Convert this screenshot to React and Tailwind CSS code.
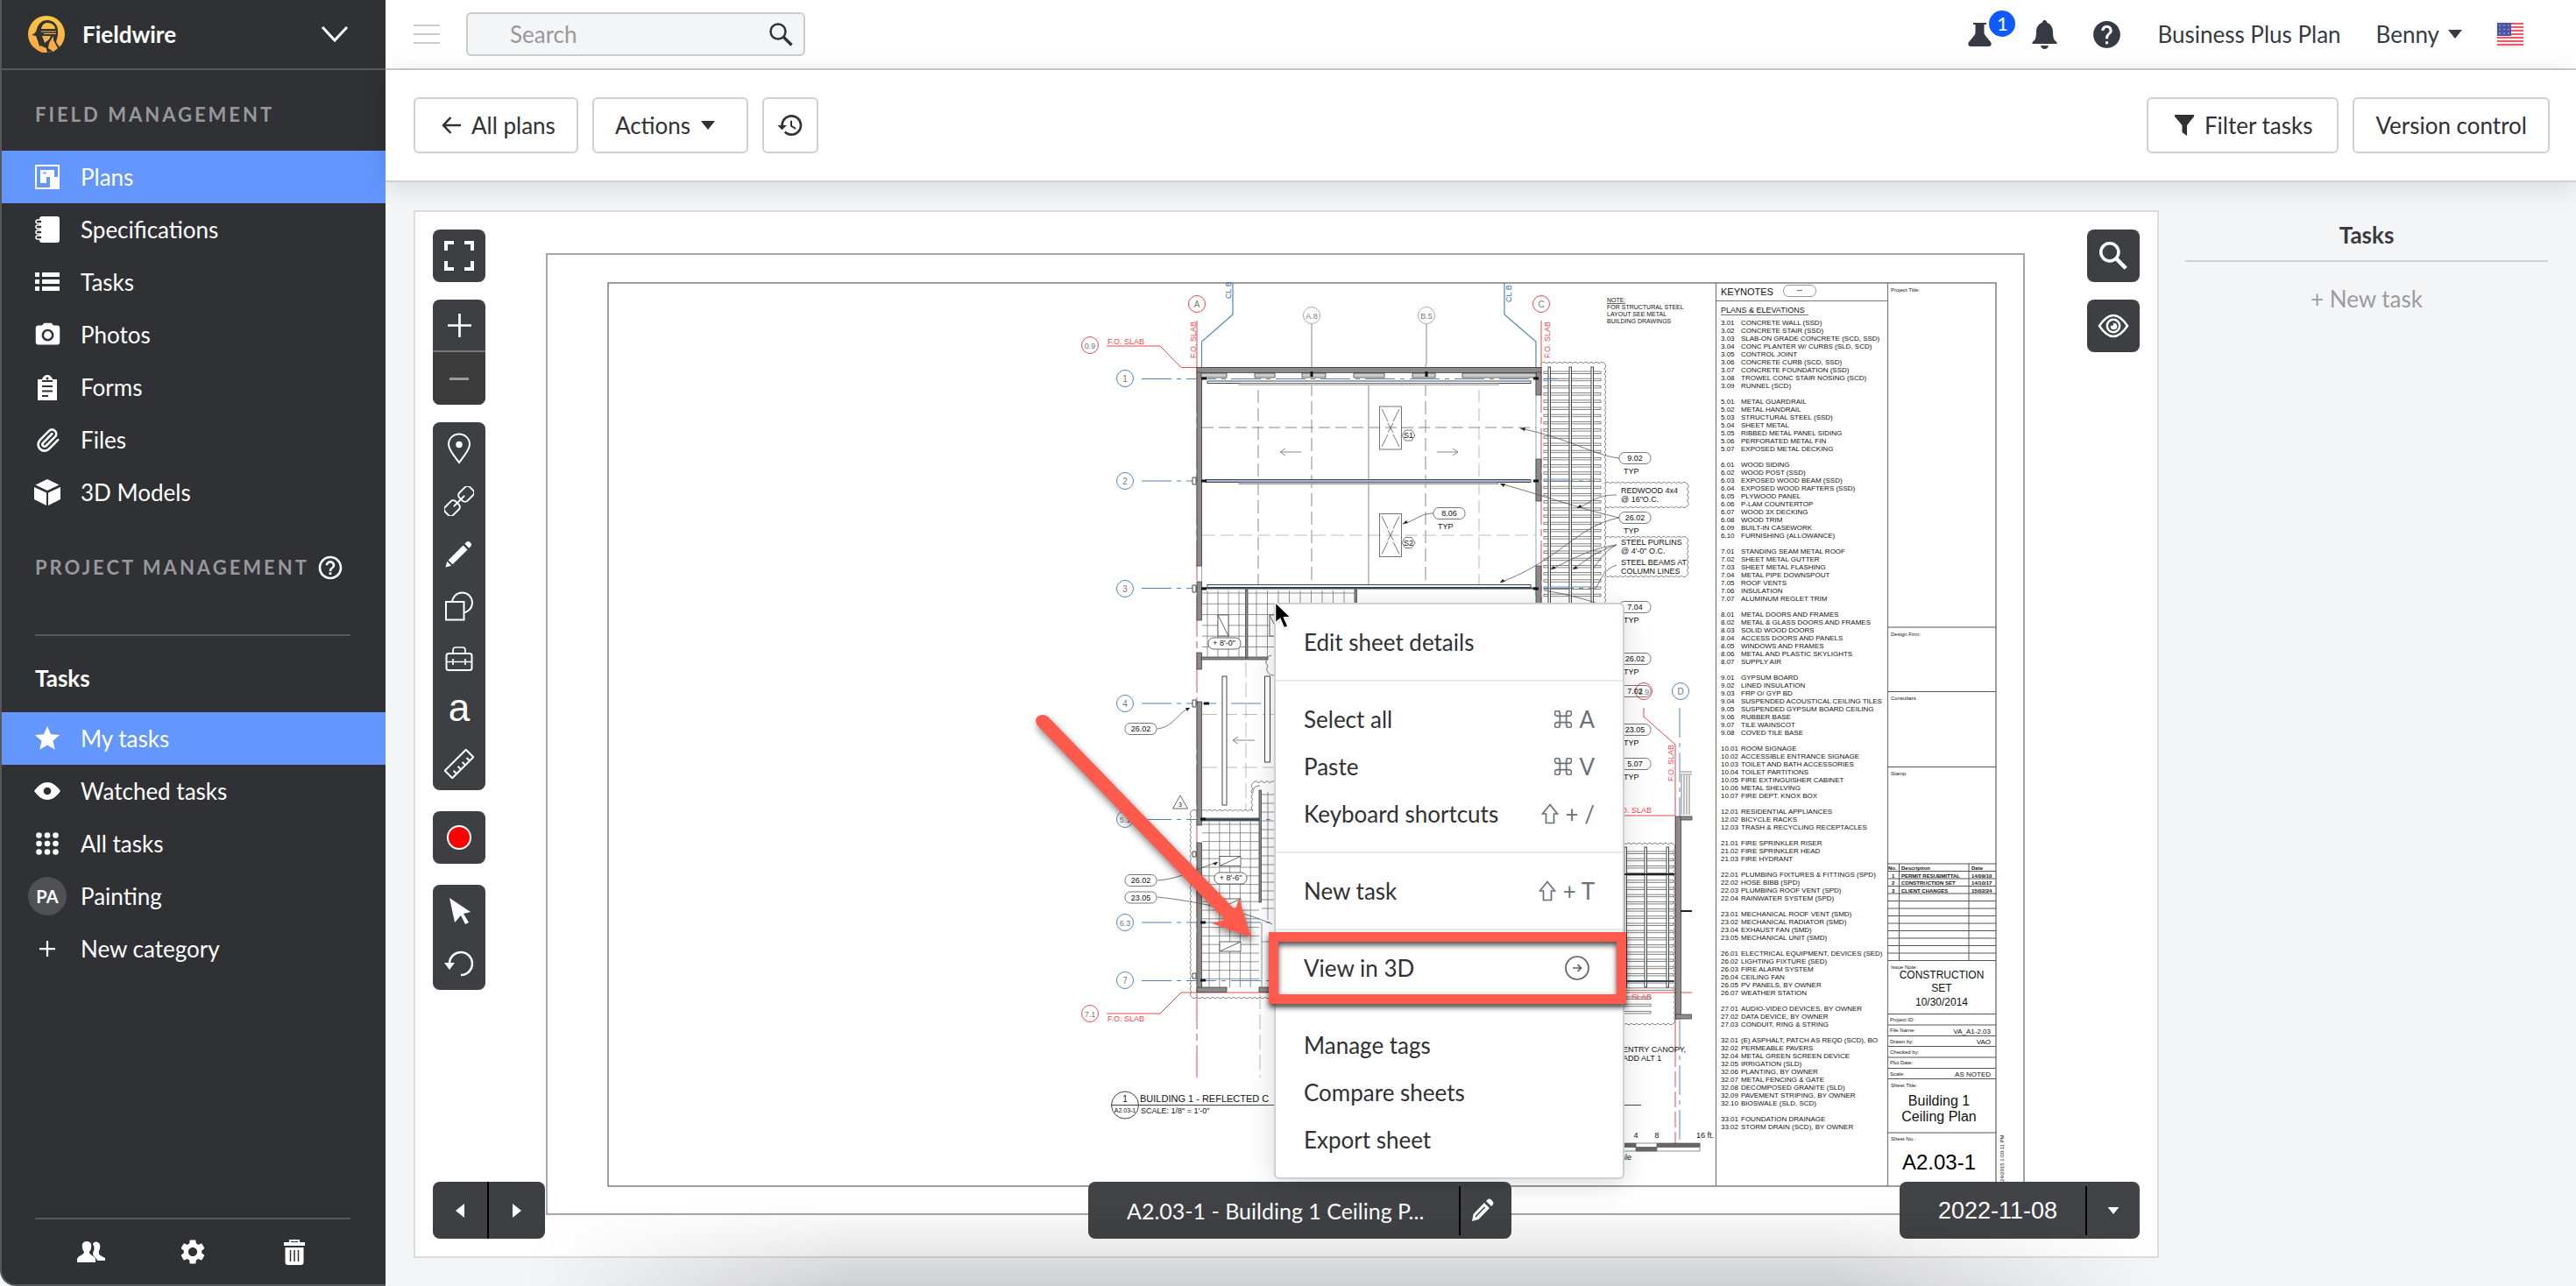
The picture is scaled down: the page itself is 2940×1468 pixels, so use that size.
import React from "react";
import { MdCameraAlt, MdHelpOutline, MdHelp, MdStar, MdSettings, MdHistory } from "react-icons/md";
import { Paperclip } from "lucide-react";

/* ---------- icons ---------- */

function Svg({ w, h, box, children, className }) {
  return (
    <svg width={w} height={h} viewBox={box || `0 0 ${w} ${h}`} fill="none" className={className} aria-hidden="true">
      {children}
    </svg>
  );
}

const Logo = () => (
  <Svg w={42} h={42}>
    <defs>
      <linearGradient id="logo" x1="0" y1="0" x2="0" y2="1">
        <stop offset="0" stopColor="#fdc840" />
        <stop offset="1" stopColor="#f6a748" />
      </linearGradient>
    </defs>
    <circle cx="21" cy="21" r="21" fill="url(#logo)" />
    <path d="M4 22 C7 21 9 19 10 15 C12 8 17 5 22 5 C29 5 34 10 34 17 L34 22 L32 30 L36 36 L31 40 L22 42 L21 38 L13 35 L12 31 L9 23 Z" fill="#303134" />
    <path d="M15 15 C16 10 19 8 22 8 C27 8 31 11 31 15 Z" fill="#fbbd43" />
    <path d="M15 18 h17 M18 20.500 h14" stroke="#fab745" strokeWidth="1.200" />
    <path d="M16 23 H26 L24 27 L19 31 Z" fill="#f9b146" />
    <path d="M29 23 V28 L34 37 L29 41 L23 37 L24 31 Z" fill="#f8ac47" />
    <path d="M14 34 L21 37 V42 H16 L10 39 Z" fill="#f6a748" />
  </Svg>
);

const Chevron = () => (
  <Svg w={32} h={20}><path d="M2 2 L16 17 L30 2" stroke="#fff" strokeWidth="3" /></Svg>
);

const PlansIcon = () => (
  <Svg w={28} h={28}>
    <rect x="1" y="1" width="26" height="26" stroke="#fff" strokeWidth="2" />
    <path d="M6 6 H22 V14 H27 V27 H17 V14 H13 V21 H6 Z" fill="#fff" />
    <path d="M9 9.500 h4 M16 14 v4" stroke="#6396ff" strokeWidth="1.500" />
  </Svg>
);
const SpecsIcon = () => (
  <Svg w={28} h={30}>
    <rect x="5" y="0" width="23" height="30" rx="3" fill="#fff" />
    {[6, 12, 18, 24].map((y) => (
      <rect key={y} x="1" y={y - 2} width="7" height="4" rx="2" fill="#303134" stroke="#fff" strokeWidth="1.500" />
    ))}
  </Svg>
);
const ListIcon = () => (
  <Svg w={28} h={22}>
    {[0, 8, 16].map((y) => (
      <g key={y} fill="#fff"><rect x="0" y={y} width="5" height="5" /><rect x="8" y={y} width="20" height="5" /></g>
    ))}
  </Svg>
);
const FormsIcon = () => (
  <Svg w={22} h={29}>
    <path d="M0 5 H5 C6 2 8 0 11 0 C14 0 16 2 17 5 H22 V29 H0 Z" fill="#fff" />
    <circle cx="11" cy="4" r="1.500" fill="#303134" />
    <path d="M5 7 H17 M5 13 H17 M5 18.500 H17 M5 24 H12" stroke="#303134" strokeWidth="2" />
  </Svg>
);
const CubeIcon = () => (
  <Svg w={30} h={30}>
    <path d="M15 0 L28.500 6.500 L15 13 L1.500 6.500 Z M0 9 L14 15.500 V30 L0 23 Z M30 9 L16 15.500 V30 L30 23 Z" fill="#fff" />
  </Svg>
);
const WatchIcon = () => (
  <Svg w={30} h={20}>
    <path d="M0 10 C5 3 10 0 15 0 C20 0 25 3 30 10 C25 17 20 20 15 20 C10 20 5 17 0 10 Z" fill="#fff" />
    <circle cx="15" cy="10" r="4.300" fill="#303134" />
  </Svg>
);
const DotsIcon = () => (
  <Svg w={26} h={26}>
    {[3.5, 13, 22.5].map((y) => [3.5, 13, 22.5].map((x) => <circle key={`${x}-${y}`} cx={x} cy={y} r="3.300" fill="#fff" />))}
  </Svg>
);
const PlusIcon = ({ size = 18, stroke = 2.5 }) => (
  <Svg w={size} h={size} box="0 0 20 20"><path d="M10 0 V20 M0 10 H20" stroke="#fff" strokeWidth={stroke} /></Svg>
);
const PeopleIcon = () => (
  <Svg w={32} h={24}>
    <path d="M18 3 C19 1 21 0 23 1 C27 2 27 7 25 11 C24 15 26 16 32 19 V22 H23 C22 18 17 17 18 13 C20 10 20 6 18 3 Z" fill="#fff" />
    <path d="M11 0 C15 0 17 3 16 7 C16 9 15 11 14 12 C13 16 21 16 21 21 V24 H0 V21 C0 16 8 16 8 12 C7 11 6 9 6 7 C5 3 7 0 11 0 Z" fill="#fff" />
  </Svg>
);
const TrashIcon = () => (
  <Svg w={24} h={29}>
    <path d="M7 3 V1 H17 V3" stroke="#fff" strokeWidth="2" />
    <path d="M0 3 H24 V7 H0 Z M1.500 9 H22.500 V26 Q22.500 29 19 29 H5 Q1.500 29 1.500 26 Z" fill="#fff" />
    <path d="M7.500 12 V25 M12 12 V25 M16.500 12 V25" stroke="#303134" strokeWidth="1.500" />
  </Svg>
);
const SearchIcon = ({ size = 27, color = "#333", stroke = 2.5 }) => (
  <Svg w={size} h={size} box="0 0 27 27">
    <circle cx="10" cy="10" r="8.500" stroke={color} strokeWidth={stroke} />
    <path d="M16 16 L25.500 25.500" stroke={color} strokeWidth={stroke + 0.8} />
  </Svg>
);
const FlaskIcon = () => (
  <Svg w={27} h={27}>
    <path d="M6 0 H21 V2 H18.500 V12 Q19 14 26 22 Q28 26 24.500 27 H2.500 Q-1 26 1 22 Q8 14 8.500 12 V2 H6 Z" fill="#353a45" />
  </Svg>
);
const BellIcon = () => (
  <Svg w={29} h={33}>
    <circle cx="14.500" cy="2.500" r="2.500" fill="#353a45" />
    <path d="M14.500 2 C21 3 24 8 24 13 C24 20 25 23 28.500 25 Q29 27 28 27 H1 Q0 27 .5 25 C4 23 5 20 5 13 C5 8 8 3 14.500 2 Z" fill="#353a45" />
    <path d="M10 29 H19 Q18 33 14.500 33 Q11 33 10 29 Z" fill="#353a45" />
  </Svg>
);
const Caret = ({ w = 16, h = 10, color = "#303134" }) => (
  <Svg w={w} h={h} box="0 0 16 10"><path d="M0 0 H16 L8 10 Z" fill={color} /></Svg>
);
const Flag = () => (
  <Svg w={30} h={26}>
    <rect width="30" height="26" rx="1" fill="#f3f3f5" />
    {[0, 4, 8, 12, 16, 20, 24].map((y) => <rect key={y} y={y} width="30" height="2" fill="#ee5a62" />)}
    <rect width="16" height="15" fill="#4a55a5" />
    {[3, 7.5, 12].map((y) => [3, 8, 13].map((x) => <circle key={`${x}-${y}`} cx={x} cy={y} r=".8" fill="#c5c9e8" />))}
  </Svg>
);
const FilterIcon = () => (
  <Svg w={22} h={24}><path d="M0 0 H22 V2 L14 12 V24 L8.500 20 V12 L0 2 Z" fill="#303134" /></Svg>
);
const ArrowLeft = () => (
  <Svg w={22} h={20}><path d="M10.500 1 L2 10 L10.500 19 M2 10 H22" stroke="#303134" strokeWidth="2.500" /></Svg>
);
const FullscreenIcon = () => (
  <Svg w={34} h={34}><path d="M11 2 H2 V11 M23 2 H32 V11 M11 32 H2 V23 M23 32 H32 V23" stroke="#fff" strokeWidth="4" /></Svg>
);
const PinIcon = () => (
  <Svg w={28} h={36}>
    <path d="M14 34 C9 27 2 20 2 13 A12 11.500 0 0 1 26 13 C26 20 19 27 14 34 Z" stroke="#fff" strokeWidth="2" />
    <circle cx="14" cy="13.500" r="3.700" fill="#fff" />
  </Svg>
);
const LinkIcon = () => (
  <Svg w={34} h={34}>
    <g transform="rotate(-45 17 17)" stroke="#fff" strokeWidth="2">
      <rect x="-3" y="10.500" width="17" height="13" rx="4" />
      <rect x="20" y="10.500" width="17" height="13" rx="4" />
      <path d="M9 17 H25" strokeLinecap="round" />
    </g>
  </Svg>
);
const PencilIcon = () => (
  <Svg w={32} h={32}>
    <g transform="rotate(-45 16 16)" fill="#fff">
      <rect x="2" y="12.500" width="24" height="7" />
      <path d="M0 12.500 V19.500 L-6 16 Z M28.500 12.500 H31 Q34 12.500 34 16 Q34 19.500 31 19.500 H28.500 Z" />
    </g>
  </Svg>
);
const ShapesIcon = () => (
  <Svg w={34} h={34}>
    <circle cx="20.500" cy="13" r="11.500" stroke="#fff" strokeWidth="2" />
    <rect x="2" y="12" width="20.500" height="20.500" fill="#3e3f43" stroke="#fff" strokeWidth="2" />
  </Svg>
);
const ToolboxIcon = () => (
  <Svg w={32} h={28}>
    <path d="M9 8 V4 Q9 1 12 1 H20 Q23 1 23 4 V8 M1 17.500 H31 M9 14 V21 M23 14 V21" stroke="#fff" strokeWidth="1.700" />
    <rect x="1.500" y="8" width="29" height="19" rx="2.500" stroke="#fff" strokeWidth="2" />
  </Svg>
);
const RulerIcon = () => (
  <Svg w={34} h={34}>
    <g transform="rotate(-45 17 17)" stroke="#fff" strokeWidth="2">
      <rect x="0" y="11" width="34" height="12" />
      <path d="M7 23 V18 M14 23 V18 M21 23 V18 M28 23 V18" />
    </g>
  </Svg>
);
const CursorIcon = () => (
  <Svg w={25} h={30}><path d="M1 0 L25 16 L17 18 L23 28 L19 30 L14 20 L7 28 Z" fill="#fff" /></Svg>
);
const UndoIcon = () => (
  <Svg w={34} h={32}>
    <path d="M6 15 A13 13 0 1 1 19 29" stroke="#fff" strokeWidth="2.500" />
    <path d="M0 15 H12 L6 23 Z" fill="#fff" />
  </Svg>
);
const EyeIcon = () => (
  <Svg w={36} h={28}>
    <path d="M2 14 C8 5 13 2 18 2 C23 2 28 5 34 14 C28 23 23 26 18 26 C13 26 8 23 2 14 Z" stroke="#fff" strokeWidth="2.500" />
    <circle cx="18" cy="14" r="7.200" stroke="#fff" strokeWidth="2.500" />
    <circle cx="18.500" cy="14.500" r="3.800" fill="#fff" /><circle cx="16" cy="12" r="2" fill="#3e3f43" />
  </Svg>
);
const EditIcon = () => (
  <Svg w={26} h={27}>
    <path d="M1 26 L2.500 18 L15 5 L21 11 L8.500 24 Z M17 3 L19.500 .8 Q21 0 22.500 1 L25 4 Q26 5.500 25 7 L23 9 Z" fill="#fff" />
    <path d="M5 21 L15.500 10" stroke="#3e3f43" strokeWidth="1.500" />
  </Svg>
);
const Side = ({ left }) => (
  <Svg w={10} h={16}><path d={left ? "M10 0 V16 L0 8 Z" : "M0 0 V16 L10 8 Z"} fill="#fff" /></Svg>
);
const CommandIcon = () => (
  <Svg w={20} h={20} box="1 1 22 22">
    <path d="M8 8 H16 V16 H8 Z M8 8 H5 A3.300 3.300 0 1 1 8 5 Z M16 8 V5 A3.300 3.300 0 1 1 19 8 Z M8 16 V19 A3.300 3.300 0 1 1 5 16 Z M16 16 H19 A3.300 3.300 0 1 1 16 19 Z" stroke="#6b6f78" strokeWidth="1.900" />
  </Svg>
);
const ShiftIcon = () => (
  <Svg w={20} h={24}><path d="M10 1.500 L18.500 12 H14.500 V22.500 H5.500 V12 H1.500 Z" stroke="#6b6f78" strokeWidth="1.700" /></Svg>
);
const GoIcon = () => (
  <Svg w={28} h={28}>
    <circle cx="14" cy="14" r="13" stroke="#5c6068" strokeWidth="1.700" />
    <path d="M9 14 H18.500 M14.500 10 L18.500 14 L14.500 18" stroke="#5c6068" strokeWidth="1.700" />
  </Svg>
);

/* ---------- plan sheet ---------- */

const KEYNOTES = [
  ["3.01|CONCRETE WALL (SSD)", "3.02|CONCRETE STAIR (SSD)", "3.03|SLAB-ON GRADE CONCRETE (SCD, SSD)", "3.04|CONC PLANTER W/ CURBS (SLD, SCD)", "3.05|CONTROL JOINT", "3.06|CONCRETE CURB (SCD, SSD)", "3.07|CONCRETE FOUNDATION (SSD)", "3.08|TROWEL CONC STAIR NOSING (SCD)", "3.09|RUNNEL (SCD)"],
  ["5.01|METAL GUARDRAIL", "5.02|METAL HANDRAIL", "5.03|STRUCTURAL STEEL (SSD)", "5.04|SHEET METAL", "5.05|RIBBED METAL PANEL SIDING", "5.06|PERFORATED METAL FIN", "5.07|EXPOSED METAL DECKING"],
  ["6.01|WOOD SIDING", "6.02|WOOD POST (SSD)", "6.03|EXPOSED WOOD BEAM (SSD)", "6.04|EXPOSED WOOD RAFTERS (SSD)", "6.05|PLYWOOD PANEL", "6.06|P-LAM COUNTERTOP", "6.07|WOOD 3X DECKING", "6.08|WOOD TRIM", "6.09|BUILT-IN CASEWORK", "6.10|FURNISHING (ALLOWANCE)"],
  ["7.01|STANDING SEAM METAL ROOF", "7.02|SHEET METAL GUTTER", "7.03|SHEET METAL FLASHING", "7.04|METAL PIPE DOWNSPOUT", "7.05|ROOF VENTS", "7.06|INSULATION", "7.07|ALUMINUM REGLET TRIM"],
  ["8.01|METAL DOORS AND FRAMES", "8.02|METAL & GLASS DOORS AND FRAMES", "8.03|SOLID WOOD DOORS", "8.04|ACCESS DOORS AND PANELS", "8.05|WINDOWS AND FRAMES", "8.06|METAL AND PLASTIC SKYLIGHTS", "8.07|SUPPLY AIR"],
  ["9.01|GYPSUM BOARD", "9.02|LINED INSULATION", "9.03|FRP O/ GYP BD", "9.04|SUSPENDED ACOUSTICAL CEILING TILES", "9.05|SUSPENDED GYPSUM BOARD CEILING", "9.06|RUBBER BASE", "9.07|TILE WAINSCOT", "9.08|COVED TILE BASE"],
  ["10.01|ROOM SIGNAGE", "10.02|ACCESSIBLE ENTRANCE SIGNAGE", "10.03|TOILET AND BATH ACCESSORIES", "10.04|TOILET PARTITIONS", "10.05|FIRE EXTINGUISHER CABINET", "10.06|METAL SHELVING", "10.07|FIRE DEPT. KNOX BOX"],
  ["12.01|RESIDENTIAL APPLIANCES", "12.02|BICYCLE RACKS", "12.03|TRASH & RECYCLING RECEPTACLES"],
  ["21.01|FIRE SPRINKLER RISER", "21.02|FIRE SPRINKLER HEAD", "21.03|FIRE HYDRANT"],
  ["22.01|PLUMBING FIXTURES & FITTINGS (SPD)", "22.02|HOSE BIBB (SPD)", "22.03|PLUMBING ROOF VENT (SPD)", "22.04|RAINWATER SYSTEM (SPD)"],
  ["23.01|MECHANICAL ROOF VENT (SMD)", "23.02|MECHANICAL RADIATOR (SMD)", "23.04|EXHAUST FAN (SMD)", "23.05|MECHANICAL UNIT (SMD)"],
  ["26.01|ELECTRICAL EQUIPMENT, DEVICES (SED)", "26.02|LIGHTING FIXTURE (SED)", "26.03|FIRE ALARM SYSTEM", "26.04|CEILING FAN", "26.05|PV PANELS, BY OWNER", "26.07|WEATHER STATION"],
  ["27.01|AUDIO-VIDEO DEVICES, BY OWNER", "27.02|DATA DEVICE, BY OWNER", "27.03|CONDUIT, RING & STRING"],
  ["32.01|(E) ASPHALT, PATCH AS REQD (SCD), BO", "32.02|PERMEABLE PAVERS", "32.04|METAL GREEN SCREEN DEVICE", "32.05|IRRIGATION (SLD)", "32.06|PLANTING, BY OWNER", "32.07|METAL FENCING & GATE", "32.08|DECOMPOSED GRANITE (SLD)", "32.09|PAVEMENT STRIPING, BY OWNER", "32.10|BIOSWALE (SLD, SCD)"],
  ["33.01|FOUNDATION DRAINAGE", "33.02|STORM DRAIN (SCD), BY OWNER"],
];
const NOTE_LINES = KEYNOTES.flatMap((g, i) => (i ? [null, ...g] : g));

const RED = "#e8484e";
const BLUE = "#4f86b8";

const range = (from, to, step) => {
  const out = [];
  for (let v = from; v <= to; v += step) out.push(v);
  return out;
};

/* revision cloud: scallops along a list of corner points */
function cloud(points) {
  let d = `M${points[0][0]} ${points[0][1]}`;
  for (let i = 1; i < points.length; i++) {
    const [x0, y0] = points[i - 1];
    const [x1, y1] = points[i];
    const n = Math.max(1, Math.round(Math.hypot(x1 - x0, y1 - y0) / 6));
    for (let k = 1; k <= n; k++) d += ` A3.500 3.500 0 0 1 ${x0 + ((x1 - x0) * k) / n} ${y0 + ((y1 - y0) * k) / n}`;
  }
  return d;
}

const T = ({ x, y, s = 9, a, c = "#111", b, r, children }) => (
  <text x={x} y={y} fontSize={s} textAnchor={a} fill={c} fontWeight={b ? 700 : 400} transform={r ? `rotate(-90 ${x} ${y})` : undefined}>
    {children}
  </text>
);
const Bubble = ({ x, y, c, children }) => (
  <g>
    <circle cx={x} cy={y} r="9.500" stroke={c} />
    <T x={x} y={y + 4} s={String(children).length > 2 ? 9 : 10} a="middle" c="#777">{children}</T>
  </g>
);
const Tag = ({ x, y, typ, children }) => (
  <g>
    <rect x={x - 18} y={y - 6.5} width="36" height="13" rx="6" stroke="#555" strokeWidth=".8" />
    <T x={x} y={y + 3} a="middle">{children}</T>
    {typ && <T x={x - 13} y={y + 18}>TYP</T>}
  </g>
);
const Skylight = ({ y, label }) => (
  <g stroke="#666" strokeWidth=".9">
    <rect x="1574.500" y={y} width="25" height="49" />
    <path d={`M1577 ${y + 3} l7 14 M1597 ${y + 3} l-7 14 M1577 ${y + 46} l7 -14 M1597 ${y + 46} l-7 -14 M1584 ${y + 19} l6 11 M1590 ${y + 19} l-6 11`} />
    <path d={`M1604 ${y + 27} h7 l4 6 l-4 6 h-7 l-4 -6 Z`} />
    <g stroke="none"><T x={1607.5} y={y + 36} a="middle">{label}</T></g>
  </g>
);

function PlanSheet() {
  const F = 7;
  return (
    <svg viewBox="474 242 1988 1192" className="absolute inset-0 h-full w-full" fill="none" fontFamily="'Liberation Sans', Arial, sans-serif" role="img" aria-label="Building 1 reflected ceiling plan">
      <rect x="624" y="290" width="1686" height="1096" stroke="#a6a6a6" strokeWidth="2" />
      <path d="M694 323 H2278 V1354 H694 Z" stroke="#7d7d7d" strokeWidth="1.500" />

      {/* upper pergola */}
      <g stroke="#777" strokeWidth=".9">
        {range(424, 684, 8.2).map((y) => <rect key={y} x="1762" y={y} width="65" height="2.500" />)}
        {[1767, 1791, 1816].map((x) => <rect key={x} x={x} y="419" width="2.500" height="271" fill="#fff" stroke="#333" />)}
        <path d={cloud([[1759, 415], [1831, 415], [1831, 700]])} />
        <path d={cloud([[1832, 552], [1925, 552], [1925, 578], [1832, 578]])} />
        <path d={cloud([[1832, 614], [1925, 614], [1925, 657], [1832, 657]])} />
      </g>

      {/* grid lines */}
      <g stroke={BLUE} strokeWidth="1" strokeDasharray="34 6 5 6">
        <path d="M1303 432.500 H1778" /><path d="M1303 549 H1820" /><path d="M1303 671.500 H1820" />
        <path d="M1303 803 H1455" /><path d="M1303 935.500 H1455" /><path d="M1303 1053 H1455" /><path d="M1303 1119.500 H1455" />
        <path d="M1917 808 V1310" />
      </g>
      <g stroke={BLUE} strokeWidth="1.200">
        <path d="M1407 323 V359 L1371.500 390 V425" /><path d="M1717 323 V359 L1753 390 V425" />
        <path d="M1371.500 425 V690 M1753 425 V680" strokeWidth=".7" />
      </g>
      <g stroke={RED} strokeWidth="1">
        <path d="M1263 395 H1324 L1348 419.500 H1759" />
        <path d="M1366 366 V425 M1759 366 V425" />
        <path d="M1366 425 V1230 M1759 425 V690" strokeDasharray="46 5 8 5" />
        <path d="M1263 1157 H1324 L1348 1133 H1455" />
        <path d="M1876 808 V818 L1912 850 V1200" /><path d="M1912 1200 V1310" strokeDasharray="18 5" />
        <path d="M1853 931 H1912 M1853 1133 H1931" />
      </g>
      <g stroke="#888" strokeWidth="1">
        <path d="M1497 370 V416 M1628 370 V416" />
        <path d="M1436 445 V671 M1497 416 V671 M1627 416 V671" strokeDasharray="15 6" />
        <path d="M1688 445 V671 M1372 611 H1753" stroke="#bbb" strokeDasharray="15 6" />
        <path d="M1372 488 H1753" strokeDasharray="13 6" />
        <path d="M1562 436 V671" />
        <path d="M1461 516 H1485 M1467 512 L1461 516 L1467 520 M1640 516 H1664 M1658 512 L1664 516 L1658 520" />
        <path d="M1422 756 V925 M1372 815.500 H1455 M1372 876 H1455 M1438 1135 V1230" stroke="#bbb" strokeDasharray="17 6" />
        <path d="M1407 845 H1432 M1413 841 L1407 845 L1413 849" />
      </g>
      <Skylight y={464} label="S1" />
      <Skylight y={586.5} label="S2" />

      {/* walls */}
      <g fill="#8c8c8c" stroke="#333" strokeWidth=".7">
        <rect x="1366" y="419.500" width="393" height="6" />
        {[[425, 221], [664, 44], [745, 19], [801, 141], [962, 170]].map(([y, h]) => <rect key={y} x="1366" y={y} width="5.500" height={h} />)}
        {[[425, 26], [524, 48], [646, 44]].map(([y, h]) => <rect key={y} x="1753" y={y} width="6" height={h} />)}
        {[[1371, 29], [1432, 23], [1486, 27], [1545, 35], [1612, 26], [1669, 84]].map(([x, w]) => <rect key={x} x={x} y="426" width={w} height="5" fill="#ccc" />)}
        <rect x="1366" y="1127" width="34" height="5.500" /><rect x="1437" y="1127" width="18" height="5.500" />
        <rect x="1371" y="750" width="76" height="3" /><rect x="1421.500" y="673" width="2.500" height="78" /><rect x="1546" y="673" width="2.500" height="20" />
        <rect x="1371" y="934" width="66" height="3" /><rect x="1437" y="902" width="2.500" height="128" />
        <rect x="1912.500" y="932" width="6" height="231" /><rect x="1918" y="932" width="13" height="4" /><rect x="1912.500" y="1158" width="18" height="5" />
      </g>
      <g fill="#fff" stroke="#333" strokeWidth=".9">
        <rect x="1378" y="435" width="369" height="2.500" /><rect x="1376" y="547.500" width="371" height="3" /><rect x="1378" y="667.500" width="369" height="3" />
        <rect x="1414" y="438" width="296" height="1.500" stroke="#aaa" /><rect x="1414" y="551" width="296" height="1.500" stroke="#888" />
        <rect x="1395" y="772" width="5" height="147" /><rect x="1443.500" y="772" width="6" height="98" />
        <path d="M1361 545 h4 v8 h-4 Z M1361 668 h4 v8 h-4 Z M1361 799 h4 v8 h-4 Z M1361 972 h4 v6 h-4 Z M1361 1111 h4 v6 h-4 Z" />
      </g>
      <path d="M1376 549 H1747" stroke="#7fa3c4" strokeWidth="1.500" />
      <path d="M1372 671.500 H1753 M1371 935.500 H1437" stroke="#30475e" strokeWidth="2" />
      <path d="M1371 432 h6 M1750 432 h6 M1371 549 h6 M1750 549 h6 M1371 672 h6 M1750 672 h6 M1374 803 h6 M1370 935 h6 M1370 1053 h6 M1370 1119 h6 M1497 424 v6 M1628 424 v6" stroke="#111" strokeWidth="3" />

      {/* ceiling grids */}
      <g stroke="#777" strokeWidth=".8">
        {range(1378, 1416, 12).map((x) => <path key={x} d={`M${x} 674 V750`} />)}
        {range(1434, 1546, 12.5).map((x) => <path key={x} d={`M${x} 674 V750`} />)}
        {range(677, 742, 12.3).map((y) => <path key={y} d={`M1372 ${y} H1547`} />)}
        {range(1380, 1434, 11.8).map((x) => <path key={x} d={`M${x} 938 V1127`} />)}
        {range(941, 1124, 9.8).map((y) => <path key={y} d={`M1372 ${y} H1437`} />)}
        {range(907, 1046, 10).map((y) => <path key={y} d={`M1440 ${y} H1455`} />)}
        <path d="M1447 904 V1050 M1440 1053 V1127 M1440 1075 H1455" />
      </g>
      <g fill="#fff" stroke="#555" strokeWidth=".9">
        <path d="M1390 702 h12 v24 h-12 Z l12 24 M1449 702 h12 v24 h-12 Z l12 24" />
        <path d="M1392 977.500 h24 v11 h-24 Z m24 0 l-24 11 M1392 1026 h24 v11 h-24 Z m24 0 l-24 11 M1392 1075 h24 v11 h-24 Z m24 0 l-24 11" />
        <rect x="1379" y="728" width="37" height="13" rx="6" /><rect x="1386" y="996" width="37" height="13" rx="6" />
      </g>
      <T x={1397} y={737} a="middle">+ 8'-0"</T>
      <T x={1404.5} y={1005} a="middle">+ 8'-6"</T>
      <path d={cloud([[1430, 925], [1430, 894], [1456, 894]])} stroke="#777" strokeWidth=".9" />
      <path d={cloud([[1456, 1138], [1360, 1138], [1360, 926], [1430, 926]])} stroke="#777" strokeWidth=".9" />
      <path d="M1456 770 a7 7 0 0 1 -9 -10 a7 7 0 0 1 4 -12 M1430 905 a7 7 0 0 1 8 -8" stroke="#777" />
      <path d="M1347 908 L1355.500 923 H1338.500 Z" stroke="#666" /><T x={1347} y={921} s={F} a="middle">3</T>

      {/* lower pergola and entry wall */}
      <g stroke="#777" strokeWidth=".9">
        {range(972, 1131, 8.2).map((y) => <rect key={y} x="1850" y={y} width="60" height="2.500" />)}
        {range(1138, 1162, 8.2).map((y) => <rect key={y} x="1850" y={y} width="34" height="2.500" />)}
        {[1854, 1877, 1902].map((x) => <rect key={x} x={x} y="967" width="2.500" height="160" fill="#fff" stroke="#333" />)}
        <path d={cloud([[1850, 964], [1910, 964], [1910, 1168], [1850, 1168]])} />
        <path d="M1918 881 H1931 M1918 884 H1931 M1919 885 V930 M1922 885 V930 M1925 885 V930 M1928 885 V930" />
        <path d="M1853 998 H1911 M1918 1040 H1931" stroke="#222" strokeWidth="2" />
        <path d="M1853 1120 H1911" stroke="#30475e" strokeWidth="2" />
      </g>

      {/* leaders */}
      <g stroke="#555" strokeWidth=".8">
        <path d="M1848 523 C1820 520 1790 500 1735 489 M1848 591 C1800 580 1760 565 1712 552 M1848 591 C1800 600 1780 640 1712 665 M1636 586 C1620 586 1615 595 1601 598" />
        <path d="M1845 565 C1820 565 1815 575 1800 580 M1845 622 C1820 625 1800 635 1770 650 M1845 622 C1820 630 1810 640 1795 650 M1845 622 C1830 630 1825 640 1818 650 M1845 645 C1830 650 1828 660 1821 672" />
        <path d="M1850 700 C1830 690 1800 680 1762 674 M1321 832 C1340 830 1345 812 1358 808 M1321 1005 C1345 1004 1370 990 1390 984 M1321 1024 C1360 1028 1420 1040 1452 1055" />
      </g>
      <path d="M1735 489 l6 -1 l-1 4 Z M1712 552 l6 0 l-2 4 Z M1712 665 l6 -1 l-3 -3 Z M1601 598 l6 -1 l-2 -3 Z M1800 580 l6 -1 l-3 -3 Z M1770 650 l6 -1 l-3 -3 Z M1795 650 l6 -1 l-3 -3 Z M1358 808 l-5 0 l2 4 Z M1390 984 l-6 1 l3 3 Z" fill="#222" />

      {/* bubbles */}
      <Bubble x={1366} y={347} c={RED}>A</Bubble><Bubble x={1497} y={360} c="#aaa">A.8</Bubble>
      <Bubble x={1628} y={360} c="#aaa">B.5</Bubble><Bubble x={1759} y={347} c={RED}>C</Bubble>
      <Bubble x={1244} y={394} c={RED}>0.9</Bubble><Bubble x={1284} y={432} c={BLUE}>1</Bubble>
      <Bubble x={1284} y={549} c={BLUE}>2</Bubble><Bubble x={1284} y={672} c={BLUE}>3</Bubble>
      <Bubble x={1284} y={803} c={BLUE}>4</Bubble><Bubble x={1284} y={935} c={BLUE}>5.1</Bubble>
      <Bubble x={1284} y={1053} c={BLUE}>6.3</Bubble><Bubble x={1284} y={1119} c={BLUE}>7</Bubble>
      <Bubble x={1244} y={1157} c={RED}>7.1</Bubble><Bubble x={1876} y={789} c={RED}>2.9</Bubble>
      <Bubble x={1918} y={789} c={BLUE}>D</Bubble>
      <T x={1264} y={393} c={RED}>F.O. SLAB</T><T x={1264} y={1166} c={RED}>F.O. SLAB</T>
      <T x={1365} y={409} c={RED} r>F.O. SLAB</T><T x={1769} y={409} c={RED} r>F.O. SLAB</T>
      <T x={1910} y={892} c={RED} r>F.O. SLAB</T>
      <T x={1885} y={928} a="end" c={RED}>F.O. SLAB</T><T x={1885} y={1141} a="end" c={RED}>F.O. SLAB</T>
      <T x={1405} y={341} c="#2d6ca5" r>CL B</T><T x={1725} y={345} c="#2d6ca5" r>CL B</T>

      {/* tags */}
      <Tag x={1654} y={586} typ>8.06</Tag><Tag x={1866} y={523} typ>9.02</Tag><Tag x={1866} y={591} typ>26.02</Tag>
      <Tag x={1866} y={693} typ>7.04</Tag><Tag x={1866} y={752} typ>26.02</Tag><Tag x={1866} y={789}>7.02</Tag>
      <Tag x={1866} y={833} typ>23.05</Tag><Tag x={1866} y={872} typ>5.07</Tag><Tag x={1302} y={832}>26.02</Tag>
      <Tag x={1302} y={1005}>26.02</Tag><Tag x={1302} y={1024.5}>23.05</Tag>
      <T x={1850} y={563}>REDWOOD 4x4</T><T x={1850} y={573}>@ 16"O.C.</T>
      <T x={1850} y={622}>STEEL PURLINS</T><T x={1850} y={632}>@ 4'-0" O.C.</T>
      <T x={1850} y={645}>STEEL BEAMS AT</T><T x={1850} y={655}>COLUMN LINES</T>
      <T x={1834} y={345} s={F}>NOTE:</T><path d="M1834 346.500 h21" stroke="#222" strokeWidth=".7" />
      <T x={1834} y={353} s={F}>FOR STRUCTURAL STEEL</T><T x={1834} y={361} s={F}>LAYOUT SEE METAL</T><T x={1834} y={369} s={F}>BUILDING DRAWINGS</T>
      <T x={1852} y={1201}>ENTRY CANOPY,</T><T x={1852} y={1211}>ADD ALT 1</T>

      {/* drawing title and scale bar */}
      <circle cx="1284" cy="1261.500" r="15.500" stroke="#444" />
      <path d="M1268 1261.500 H1873" stroke="#444" />
      <T x={1284} y={1258} s={10} a="middle">1</T><T x={1284} y={1270} s={F} a="middle">A2.03-1</T>
      <T x={1301} y={1258} s={11}>BUILDING 1 - REFLECTED C</T><T x={1302} y={1271}>SCALE:  1/8" = 1'-0"</T>
      <g fill="#666" stroke="#555" strokeWidth=".7">
        <rect x="1840" y="1305" width="27" height="4.500" /><rect x="1891" y="1305" width="49" height="4.500" /><rect x="1867" y="1309.500" width="24" height="4.500" />
      </g>
      <path d="M1840 1314 H1940 V1305 M1867 1305 H1891" stroke="#777" strokeWidth=".8" />
      <T x={1867} y={1299} a="middle">4</T><T x={1891} y={1299} a="middle">8</T><T x={1956} y={1299} a="end">16 ft.</T><T x={1862} y={1324} a="end">Scale</T>

      {/* keynotes */}
      <path d="M1958.500 323 V1354 M2154.500 323 V1354 M1958.500 343.500 H2154.500" stroke="#777" strokeWidth="1.200" />
      <T x={1964} y={337} s={11}>KEYNOTES</T>
      <rect x="2035.500" y="325.500" width="37" height="13" rx="6" stroke="#777" strokeWidth=".8" /><path d="M2051 331.500 h6" stroke="#777" />
      <T x={1964} y={357} s={9}>PLANS &amp; ELEVATIONS</T>
      <path d="M1964 359.500 h100" stroke="#777" />
      {NOTE_LINES.map((line, i) =>
        line ? (
          <g key={line}>
            <T x={1964} y={371 + i * 9} s={8}>{line.split("|")[0]}</T>
            <T x={1987} y={371 + i * 9} s={8}>{line.split("|")[1]}</T>
          </g>
        ) : null
      )}

      {/* title block */}
      <g stroke="#555" strokeWidth="1">
        {[716, 789.5, 875.5, 1157.5, 1170, 1182.5, 1194.5, 1207, 1219.5, 1231.5, 1293].map((y) => <path key={y} d={`M2154.500 ${y} H2278`} />)}
        {range(986, 1097, 8.5).map((y) => <path key={y} d={`M2154.500 ${y} H2278`} />)}
        <path d="M2167.500 986 V1096 M2247 986 V1096" />
      </g>
      <T x={2158} y={333} s={6}>Project Title:</T><T x={2158} y={726} s={6}>Design Firm:</T><T x={2158} y={799} s={6}>Consultant</T><T x={2158} y={885} s={6}>Stamp</T>
      <T x={2155} y={993} s={6} b>No.</T><T x={2170} y={993} s={6} b>Description</T><T x={2250} y={993} s={6} b>Date</T>
      {[["1", "PERMIT RESUBMITTAL", "14/09/10"], ["2", "CONSTRUCTION SET", "14/10/17"], ["3", "CLIENT CHANGES", "15/02/24"]].map(([n, d, t], i) => (
        <g key={n}>
          <T x={2159} y={1001.5 + i * 8.5} s={6} b>{n}</T><T x={2170} y={1001.5 + i * 8.5} s={6} b>{d}</T><T x={2250} y={1001.5 + i * 8.5} s={6} b>{t}</T>
        </g>
      ))}
      <T x={2158} y={1106} s={6}>Issue Note:</T>
      <T x={2216} y={1117} s={12} a="middle">CONSTRUCTION</T><T x={2216} y={1132} s={12} a="middle">SET</T><T x={2216} y={1148} s={12} a="middle">10/30/2014</T>
      {["Project ID:", "File Name:", "Drawn by:", "Checked by:", "Plot Date:", "Scale:"].map((l, i) => <T key={l} x={2157} y={1166 + i * 12.3} s={6}>{l}</T>)}
      <T x={2272} y={1180} s={8} a="end">VA_A1-2.03</T><T x={2272} y={1192} s={8} a="end">VAO</T><T x={2272} y={1229} s={8} a="end">AS NOTED</T>
      <T x={2158} y={1241} s={6}>Sheet Title:</T>
      <T x={2213} y={1262} s={16} a="middle" c="#111">Building 1</T><T x={2213} y={1280} s={16} a="middle" c="#111">Ceiling Plan</T>
      <T x={2158} y={1302} s={6}>Sheet No.:</T><T x={2213} y={1335} s={24} a="middle" c="#000">A2.03-1</T>
      <T x={2287} y={1354} s={6} r>2/24/2015 1:00:11 PM</T>
    </svg>
  );
}

/* ---------- page parts ---------- */

function NavRow({ icon, label, active }) {
  return (
    <a href="#" className={active ? "flex h-15 items-center gap-4 bg-[#6396ff] pl-[30px]" : "flex h-15 items-center gap-4 pl-[30px]"}>
      <span className="flex w-11 justify-center">{icon}</span>
      <span>{label}</span>
    </a>
  );
}

function Sidebar() {
  return (
    <aside className="flex w-[440px] shrink-0 flex-col rounded-bl-[18px] border-b-2 border-l-2 border-[#56575a] bg-[#303134] text-white">
      <button type="button" className="flex h-20 items-center border-b-2 border-[#56575a] pr-[42px] pl-[30px] text-left font-bold">
        <Logo />
        <span className="ml-5 flex-1">Fieldwire</span>
        <Chevron />
      </button>
      <h2 className="flex h-[92px] items-center pt-2.5 pl-[38px] text-[22px] font-bold tracking-[3px] text-[#97989c]">FIELD MANAGEMENT</h2>
      <nav>
        <NavRow active icon={<PlansIcon />} label="Plans" />
        <NavRow icon={<SpecsIcon />} label="Specifications" />
        <NavRow icon={<ListIcon />} label="Tasks" />
        <NavRow icon={<MdCameraAlt size={33} />} label="Photos" />
        <NavRow icon={<FormsIcon />} label="Forms" />
        <NavRow icon={<Paperclip size={29} strokeWidth={2.2} />} label="Files" />
        <NavRow icon={<CubeIcon />} label="3D Models" />
      </nav>
      <h2 className="flex h-[112px] items-center gap-2 pl-[38px] text-[22px] font-bold tracking-[3px] text-[#97989c]">
        PROJECT MANAGEMENT
        <MdHelpOutline size={32} color="#fff" />
      </h2>
      <hr className="mt-5 mr-10 ml-[38px] border-t-2 border-[#56575a]" />
      <h2 className="flex h-[87px] items-center pt-2 pl-[38px] font-bold">Tasks</h2>
      <nav>
        <NavRow active icon={<MdStar size={34} />} label="My tasks" />
        <NavRow icon={<WatchIcon />} label="Watched tasks" />
        <NavRow icon={<DotsIcon />} label="All tasks" />
        <NavRow icon={<span className="flex size-11 shrink-0 items-center justify-center rounded-full bg-[#505155] text-xl font-bold">PA</span>} label="Painting" />
        <NavRow icon={<PlusIcon />} label="New category" />
      </nav>
      <div className="mt-auto mr-10 ml-[38px] grid h-19 grid-cols-3 items-center justify-items-center border-t-2 border-[#56575a] px-1.5">
        <button type="button" aria-label="People"><PeopleIcon /></button>
        <button type="button" aria-label="Settings"><MdSettings size={34} /></button>
        <button type="button" aria-label="Trash"><TrashIcon /></button>
      </div>
    </aside>
  );
}

function TopBar() {
  return (
    <header className="flex h-20 items-center border-b-2 border-[#cccccc] bg-white pr-[60px] pl-8 text-[#353a45]">
      <button type="button" aria-label="Toggle menu" className="flex flex-col gap-2">
        <span className="h-0.5 w-[30px] bg-[#cccccc]" /><span className="h-0.5 w-[30px] bg-[#cccccc]" /><span className="h-0.5 w-[30px] bg-[#cccccc]" />
      </button>
      <label className="ml-[30px] flex h-[50px] w-[387px] items-center rounded-md border-2 border-[#cccccc] bg-[#f4f5f7] pr-3 pl-12">
        <input type="text" aria-label="Search" placeholder="Search" className="min-w-0 flex-1 bg-transparent outline-none placeholder:text-[#999999]" />
        <SearchIcon />
      </label>
      <div className="ml-auto flex items-center">
        <button type="button" aria-label="Labs" className="relative">
          <FlaskIcon />
          <span className="absolute -top-3.5 left-6 flex size-[30px] items-center justify-center rounded-full bg-[#0f5bff] text-[22px] leading-none text-white">1</span>
        </button>
        <button type="button" aria-label="Notifications" className="ml-[46px]"><BellIcon /></button>
        <button type="button" aria-label="Help" className="ml-[38px]"><MdHelp size={37} /></button>
        <a href="#" className="ml-[39px]">Business Plus Plan</a>
        <button type="button" className="ml-10 flex items-center gap-2.5">Benny <Caret color="#353a45" /></button>
        <button type="button" aria-label="Language" className="ml-10 drop-shadow"><Flag /></button>
      </div>
    </header>
  );
}

const BTN = "flex h-16 items-center justify-center rounded-md border-2 border-[#cfcfd7] bg-white";

function ActionBar() {
  return (
    <div className="relative z-10 flex h-32 items-center gap-4 border-b-2 border-[#cfcfd7] bg-white pr-[30px] pl-8 text-[#303134] shadow-[0_6px_30px_rgba(0,0,0,0.12)]">
      <button type="button" className={`${BTN} gap-3 pr-6 pl-[30px]`}><ArrowLeft />All plans</button>
      <button type="button" className={`${BTN} gap-3 pr-9 pl-6`}>Actions <Caret /></button>
      <button type="button" aria-label="History" className={`${BTN} w-16`}><MdHistory size={32} /></button>
      <button type="button" className={`${BTN} ml-auto gap-3 pr-7 pl-[30px]`}><FilterIcon />Filter tasks</button>
      <button type="button" className={`${BTN} px-6`}>Version control</button>
    </div>
  );
}

function Tool({ label, children, className = "" }) {
  return (
    <button type="button" aria-label={label} className={`flex h-15 w-15 items-center justify-center ${className}`}>{children}</button>
  );
}
const GROUP = "flex flex-col overflow-hidden rounded-lg bg-[#3e3f43] text-white";

function Tools() {
  return (
    <div className="absolute top-5 left-5">
      <div className={GROUP}><Tool label="Full screen"><FullscreenIcon /></Tool></div>
      <div className={`${GROUP} mt-5`}>
        <Tool label="Zoom in" className="border-b-2 border-[#75767a]"><PlusIcon size={27} stroke={2} /></Tool>
        <Tool label="Zoom out" className="bg-[#3b3b3b]"><span className="h-[3px] w-[22px] bg-[#9a9a9a]" /></Tool>
      </div>
      <div className={`${GROUP} mt-5`}>
        <Tool label="Pin"><PinIcon /></Tool>
        <Tool label="Link"><LinkIcon /></Tool>
        <Tool label="Draw"><PencilIcon /></Tool>
        <Tool label="Shapes"><ShapesIcon /></Tool>
        <Tool label="Toolbox"><ToolboxIcon /></Tool>
        <Tool label="Text"><span className="pb-2 font-['Liberation_Sans',Arial,sans-serif] text-[44px] leading-none">a</span></Tool>
        <Tool label="Measure"><RulerIcon /></Tool>
      </div>
      <div className={`${GROUP} mt-6`}>
        <Tool label="Colour"><span className="size-7 rounded-full border-2 border-white bg-[#ff0000]" /></Tool>
      </div>
      <div className={`${GROUP} mt-6`}>
        <Tool label="Select"><CursorIcon /></Tool>
        <Tool label="Undo"><UndoIcon /></Tool>
      </div>
    </div>
  );
}

function MenuItem({ label, children }) {
  return (
    <button type="button" role="menuitem" className="flex h-[54px] w-full items-center justify-between px-8 text-left">
      <span>{label}</span>
      <span className="flex items-center gap-2 text-[#6b6f78]">{children}</span>
    </button>
  );
}
const SECTION = "border-t-2 border-[#e9e9ec] py-4";

function ContextMenu() {
  return (
    <div role="menu" className="absolute top-[446px] left-[980px] w-[400px] rounded-md border-2 border-[#cdced6] bg-white text-[#303134] shadow-[0_6px_30px_rgba(0,0,0,0.15)]">
      <div className="py-4"><MenuItem label="Edit sheet details" /></div>
      <div className={SECTION}>
        <MenuItem label="Select all"><CommandIcon />A</MenuItem>
        <MenuItem label="Paste"><CommandIcon />V</MenuItem>
        <MenuItem label="Keyboard shortcuts"><ShiftIcon />+ /</MenuItem>
      </div>
      <div className={SECTION}><MenuItem label="New task"><ShiftIcon />+ T</MenuItem></div>
      <div className={`${SECTION} relative`}>
        <MenuItem label="View in 3D"><span className="mr-1.5"><GoIcon /></span></MenuItem>
        <div className="pointer-events-none absolute top-0.5 -right-1 -left-2 h-[82px] border-[11px] border-[#ff5a4b] drop-shadow-[0_4px_3px_rgba(0,0,0,0.7)]" />
      </div>
      <div className={SECTION}>
        <MenuItem label="Manage tags" />
        <MenuItem label="Compare sheets" />
        <MenuItem label="Export sheet" />
      </div>
      <Svg w={22} h={34} className="absolute -top-1 -left-0.5 drop-shadow">
        <path d="M1.500 1.500 V25 L7 20.500 L11.500 31 L16 29 L11.500 19 L19 18.500 Z" fill="#000" stroke="#fff" strokeWidth="1.500" />
      </Svg>
    </div>
  );
}

function Viewer() {
  return (
    <section className="relative mt-8 mb-8 ml-8 min-w-0 flex-1 border-2 border-[#dcdcde] bg-white text-white">
      <PlanSheet />
      <Tools />
      <div className="absolute top-5 right-5 flex flex-col gap-5">
        <div className={GROUP}><Tool label="Find"><SearchIcon size={32} color="#fff" stroke={3} /></Tool></div>
        <div className={GROUP}><Tool label="Visibility"><EyeIcon /></Tool></div>
      </div>
      <div className="absolute bottom-5 left-5 flex h-[65px] rounded-lg bg-[#3e3f43]">
        <button type="button" aria-label="Previous sheet" className="flex w-16 items-center justify-center border-r-2 border-black"><Side left /></button>
        <button type="button" aria-label="Next sheet" className="flex w-16 items-center justify-center"><Side /></button>
      </div>
      <div className="absolute bottom-5 left-[768px] flex h-[65px] items-center rounded-lg bg-[#3e3f43]/98">
        <button type="button" className="pr-10 pl-11 text-[25px]">A2.03-1 - Building 1 Ceiling P...</button>
        <button type="button" aria-label="Edit sheet" className="flex h-14 w-15 items-center border-l-2 border-black pl-3"><EditIcon /></button>
      </div>
      <div className="absolute right-5 bottom-5 flex h-[65px] items-center rounded-lg bg-[#3e3f43]/98">
        <button type="button" className="pr-8 pl-11 font-['Liberation_Sans',Arial,sans-serif] text-[27px]">2022-11-08</button>
        <button type="button" aria-label="Choose version" className="flex h-14 w-[62px] items-center justify-center border-l-2 border-black"><Caret color="#fff" h={8} /></button>
      </div>
      <ContextMenu />
      <svg viewBox="474 242 1988 1192" className="pointer-events-none absolute inset-0 h-full w-full drop-shadow-[2px_5px_4px_rgba(0,0,0,0.5)]" fill="#ff5a4b" aria-hidden="true">
        <path d="M1184 828 Q1180 822 1184 818 Q1190 814 1196 818 L1410 1039 L1414 1025 L1428 1070 L1383 1054 L1398 1050 Z" />
      </svg>
    </section>
  );
}

export default function App() {
  return (
    <div className="relative flex min-h-screen bg-[#f4f5f7] font-[Lato,sans-serif] text-[26px] leading-8">
      <Sidebar />
      <div className="flex min-w-0 flex-1 flex-col">
        <TopBar />
        <ActionBar />
        <main className="flex flex-1">
          <Viewer />
          <aside className="w-[476px] shrink-0 pt-11 pr-8 pl-[30px] text-center">
            <h2 className="border-b-2 border-[#cfcfd7] pb-[13px] font-bold text-[#3a3a3c]">Tasks</h2>
            <button type="button" className="mt-[26px] text-[#9b9ca0]">+ New task</button>
          </aside>
        </main>
      </div>
      <div className="pointer-events-none absolute right-[480px] bottom-0 left-[600px] h-24 bg-linear-to-t from-black/15 to-transparent [mask-image:linear-gradient(to_right,transparent,black_20%,black_80%,transparent)]" />
    </div>
  );
}
